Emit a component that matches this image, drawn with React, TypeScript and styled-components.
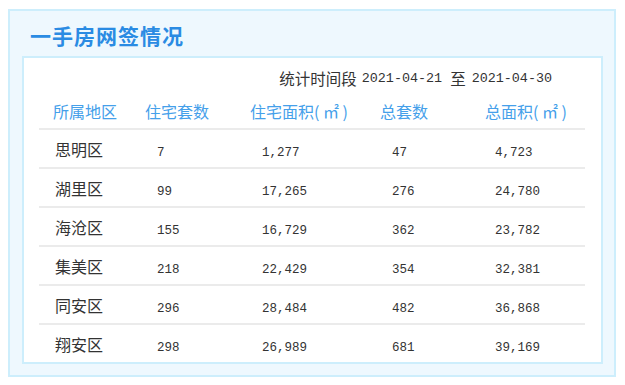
import React from "react";
import styled, { createGlobalStyle } from "styled-components";

const GlobalStyle = createGlobalStyle`
  body {
    margin: 0;
    background: #ffffff;
    font-family: "Noto Sans CJK SC", "Noto Sans", sans-serif;
  }
`;

const Page = styled.div`
  padding: 9px 0 0 8px;
`;

const Panel = styled.section`
  box-sizing: border-box;
  width: 608px;
  height: 368px;
  border: 2px solid #cdeefc;
  background: #eef8fe;
  padding: 0 11px 12px 12px;
`;

const Title = styled.h2`
  margin: 0;
  padding: 10px 0 7px 8px;
  font-size: 21px;
  line-height: 28px;
  font-weight: 700;
  color: #2a8be3;
  letter-spacing: 1px;
`;

const Card = styled.div`
  box-sizing: border-box;
  border: 2px solid #cdeefc;
  background: #ffffff;
  padding: 0 16px 0 15px;
`;

const TimeBar = styled.div`
  display: flex;
  justify-content: flex-end;
  align-items: center;
  height: 24px;
  padding: 8px 33px 0 0;
  margin-bottom: 3px;
  font-size: 15.5px;
  color: #333333;
`;

const Num = styled.span<{ $size?: number }>`
  font-family: "Liberation Mono", monospace;
  font-size: ${(p) => p.$size ?? 12.5}px;
`;

const Sep = styled.span`
  margin: 0 6px 0 8px;
`;

const Grid = styled.div<{ $head?: boolean; $last?: boolean }>`
  display: grid;
  grid-template-columns: 92px 105px 130px 105px 114px;
  align-items: center;
  height: ${(p) => (p.$head ? 35 : 37)}px;
  border-bottom: ${(p) => (p.$last ? "none" : "2px solid #ebebeb")};
`;

const HeadCell = styled.div`
  padding-left: 14px;
  font-size: 16px;
  color: #45a0ea;
  white-space: pre;
`;

const Cell = styled.div<{ $pad: number }>`
  padding-left: ${(p) => p.$pad}px;
  font-size: 16px;
  color: #333333;
  white-space: nowrap;
`;

const headers = ["所属地区", "住宅套数", "住宅面积( ㎡ )", "总套数", "总面积( ㎡ )"];

const rows: [string, string, string, string, string][] = [
  ["思明区", "7", "1,277", "47", "4,723"],
  ["湖里区", "99", "17,265", "276", "24,780"],
  ["海沧区", "155", "16,729", "362", "23,782"],
  ["集美区", "218", "22,429", "354", "32,381"],
  ["同安区", "296", "28,484", "482", "36,868"],
  ["翔安区", "298", "26,989", "681", "39,169"],
];

const pads = [16, 26, 26, 26, 24];

export default function App() {
  return (
    <>
      <GlobalStyle />
      <Page>
        <Panel>
          <Title>一手房网签情况</Title>
          <Card>
            <TimeBar>
              统计时间段
              <Num $size={13.4} style={{ marginLeft: 5 }}>2021-04-21</Num>
              <Sep>至</Sep>
              <Num $size={13.4}>2021-04-30</Num>
            </TimeBar>
            <Grid $head>
              {headers.map((h) => (
                <HeadCell key={h}>{h}</HeadCell>
              ))}
            </Grid>
            {rows.map((r, i) => (
              <Grid key={r[0]} $last={i === rows.length - 1}>
                {r.map((v, j) => (
                  <Cell key={j} $pad={pads[j]}>
                    {j === 0 ? v : <Num>{v}</Num>}
                  </Cell>
                ))}
              </Grid>
            ))}
          </Card>
        </Panel>
      </Page>
    </>
  );
}
